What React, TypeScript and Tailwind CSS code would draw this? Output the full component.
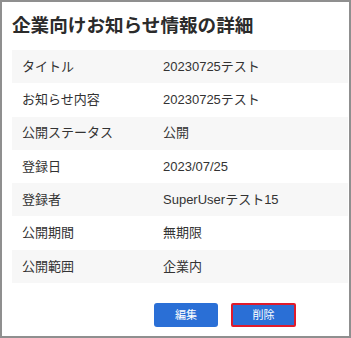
import React from "react";

const rows: [string, string][] = [
  ["タイトル", "20230725テスト"],
  ["お知らせ内容", "20230725テスト"],
  ["公開ステータス", "公開"],
  ["登録日", "2023/07/25"],
  ["登録者", "SuperUserテスト15"],
  ["公開期間", "無期限"],
  ["公開範囲", "企業内"],
];

export default function App() {
  return (
    <div
      className="w-[351px] h-[338px] border-2 border-[#8f8f8f] bg-white box-border text-[#333333] overflow-hidden"
      style={{ fontFamily: '"Liberation Sans", "Noto Sans CJK JP", sans-serif' }}
    >
      <div className="pl-[10px] pr-px">
        <h1 className="text-[18.6px] font-bold leading-[24px] pt-[12px] text-[#2b2b2b] tracking-[0px]">
          企業向けお知らせ情報の詳細
        </h1>
        <div className="mt-[12px]">
          {rows.map(([k, v], i) => (
            <div
              key={k}
              className={`flex items-center h-[33.3px] text-[13px] ${i % 2 === 0 ? "bg-[#f7f7f7]" : "bg-white"}`}
            >
              <div className="w-[151px] pl-[10px]">{k}</div>
              <div>{v}</div>
            </div>
          ))}
        </div>
        <div className="flex gap-[13px] ml-[142px] mt-[20px]">
          <button className="w-[64px] h-[24px] rounded-[3px] bg-[#2a6fd6] text-white text-[11px] leading-none">
            編集
          </button>
          <button className="w-[65px] h-[24px] rounded-[2px] bg-[#2a6fd6] text-white text-[11px] leading-none border-2 border-[#e01b2b]">
            削除
          </button>
        </div>
      </div>
    </div>
  );
}
